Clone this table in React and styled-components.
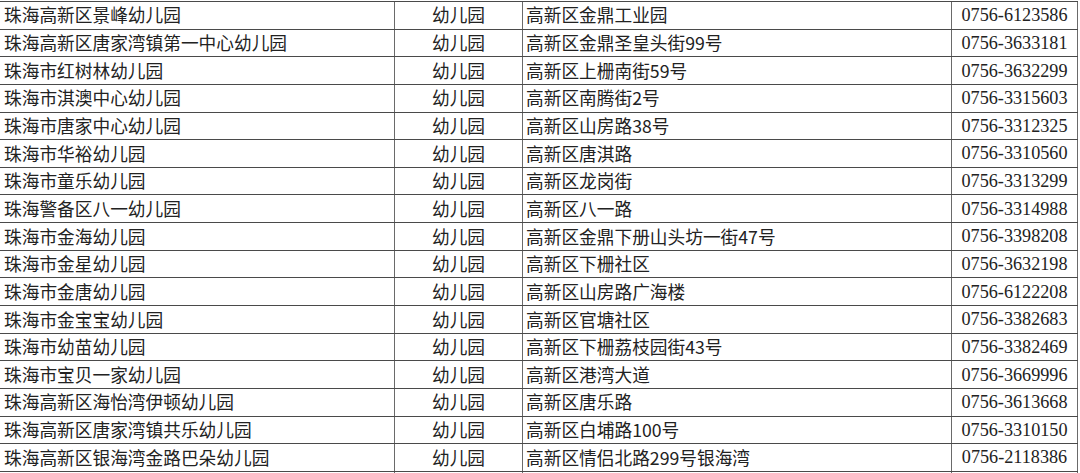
import React from 'react';
import styled, { createGlobalStyle } from 'styled-components';

const GlobalStyle = createGlobalStyle`
  html, body {
    margin: 0;
    padding: 0;
    background: #ffffff;
    overflow: hidden;
  }
`;

const rows = [
  ['珠海高新区景峰幼儿园', '高新区金鼎工业园', '0756-6123586'],
  ['珠海高新区唐家湾镇第一中心幼儿园', '高新区金鼎圣皇头街99号', '0756-3633181'],
  ['珠海市红树林幼儿园', '高新区上栅南街59号', '0756-3632299'],
  ['珠海市淇澳中心幼儿园', '高新区南腾街2号', '0756-3315603'],
  ['珠海市唐家中心幼儿园', '高新区山房路38号', '0756-3312325'],
  ['珠海市华裕幼儿园', '高新区唐淇路', '0756-3310560'],
  ['珠海市童乐幼儿园', '高新区龙岗街', '0756-3313299'],
  ['珠海警备区八一幼儿园', '高新区八一路', '0756-3314988'],
  ['珠海市金海幼儿园', '高新区金鼎下册山头坊一街47号', '0756-3398208'],
  ['珠海市金星幼儿园', '高新区下栅社区', '0756-3632198'],
  ['珠海市金唐幼儿园', '高新区山房路广海楼', '0756-6122208'],
  ['珠海市金宝宝幼儿园', '高新区官塘社区', '0756-3382683'],
  ['珠海市幼苗幼儿园', '高新区下栅荔枝园街43号', '0756-3382469'],
  ['珠海市宝贝一家幼儿园', '高新区港湾大道', '0756-3669996'],
  ['珠海高新区海怡湾伊顿幼儿园', '高新区唐乐路', '0756-3613668'],
  ['珠海高新区唐家湾镇共乐幼儿园', '高新区白埔路100号', '0756-3310150'],
  ['珠海高新区银海湾金路巴朵幼儿园', '高新区情侣北路299号银海湾', '0756-2118386'],
];

function App() {
  return (
    <>
      <GlobalStyle />
      <Sheet>
        {rows.map((row, idx) => (
          <Row key={idx.toString()}>
            <NameCell>{row[0]}</NameCell>
            <TypeCell>幼儿园</TypeCell>
            <AddressCell>{row[1]}</AddressCell>
            <PhoneCell>{row[2]}</PhoneCell>
          </Row>
        ))}
        <Row $tail>
          <NameCell />
          <TypeCell />
          <AddressCell />
          <PhoneCell />
        </Row>
      </Sheet>
    </>
  );
}

export default App;

const Sheet = styled.div`
  width: 1078px;
  height: 472px;
  overflow: hidden;
  margin-top: 1px;
  border-top: 1px solid #4a4a4a;
  display: flex;
  flex-direction: column;
  font-family: 'Noto Sans CJK SC', 'Noto Sans', sans-serif;
  font-size: 17.7px;
  color: #222222;
`;

const Row = styled.div`
  display: grid;
  grid-template-columns: 394px 128px 429px 127px;
  flex: none;
  height: ${(p) => (p.$tail ? '10px' : '26.65px')};
  border-bottom: 1px solid #4a4a4a;
`;

const Cell = styled.div`
  display: flex;
  align-items: center;
  white-space: nowrap;
  overflow: hidden;
  line-height: 1;
`;

const NameCell = styled(Cell)`
  padding-left: 4px;
`;

const TypeCell = styled(Cell)`
  justify-content: center;
  border-left: 1px solid #6a6a6a;
`;

const AddressCell = styled(Cell)`
  padding-left: 3px;
  border-left: 1px solid #6a6a6a;
`;

const PhoneCell = styled(Cell)`
  justify-content: center;
  border-left: 1px solid #6a6a6a;
  border-right: 1px solid #6a6a6a;
  font-family: 'Liberation Serif', serif;
  font-size: 18.2px;
`;
